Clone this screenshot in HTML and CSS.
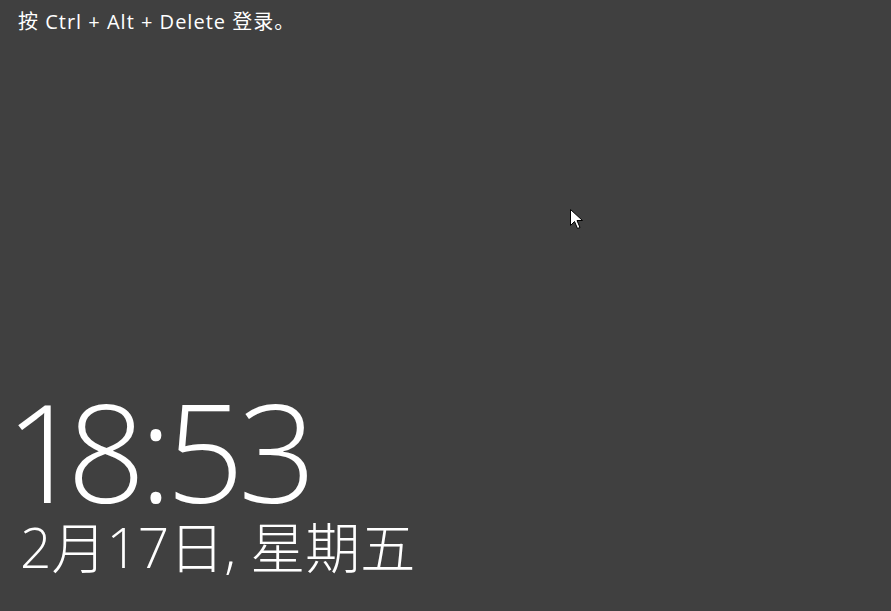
FILE: index.html
```html
<!DOCTYPE html>
<html lang="zh-CN">
<head>
<meta charset="utf-8">
<link rel="stylesheet" href="styles.css">
</head>
<body>
<div class="screen">
  <div class="hint">按 Ctrl + Alt + Delete 登录。</div>
  <div class="clock">
    <div class="time"><span class="one">1</span>8:53</div>
    <div class="date">2月17日, 星期五</div>
  </div>
  <svg class="cursor" width="13" height="20" viewBox="0 0 13 20">
    <path d="M0.5 0.5 L0.5 16.5 L4.5 12.5 L7.5 19.5 L10 18.5 L7 11.5 L12.5 11.5 Z" fill="#fff" stroke="#000" stroke-width="1"/>
  </svg>
</div>
</body>
</html>
```
FILE: styles.css
```css
html, body {
  margin: 0;
  padding: 0;
  background: #404040;
}
.screen {
  position: relative;
  width: 891px;
  height: 611px;
  overflow: hidden;
  display: flex;
  flex-direction: column;
  justify-content: space-between;
  color: #fff;
  font-family: "Open Sans", "Noto Sans CJK SC", sans-serif;
}
.hint {
  padding: 9px 0 0 18px;
  font-size: 20px;
  line-height: 26px;
  letter-spacing: 1px;
}
.clock {
  padding: 0 0 34px 5px;
}
.time {
  font-size: 137px;
  font-weight: 300;
  line-height: 124px;
  letter-spacing: -6px;
  margin-bottom: 5px;
}
.one {
  margin-right: -10px;
}
.date {
  padding-left: 15px;
  font-size: 55px;
  font-weight: 300;
  line-height: 60px;
}
.cursor {
  position: absolute;
  left: 570px;
  top: 209px;
}
```
